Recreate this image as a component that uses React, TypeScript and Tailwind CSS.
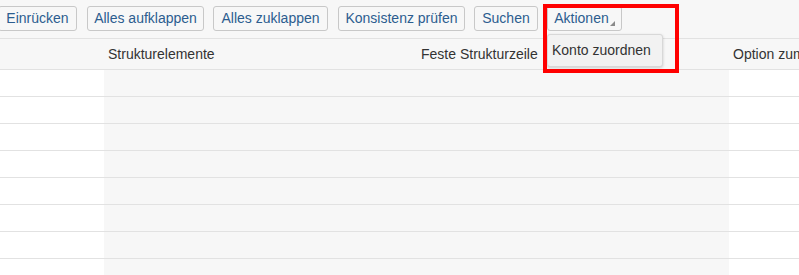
const buttons: Array<[string, string]> = [
  ["Einrücken", "ml-[-2px] w-[79px]"],
  ["Alles aufklappen", "ml-[10px] w-[117px]"],
  ["Alles zuklappen", "ml-[9px] w-[115px]"],
  ["Konsistenz prüfen", "ml-[10px] w-[127px]"],
  ["Suchen", "ml-[9px] w-[64px]"],
];

const rows = Array.from({ length: 8 });

export default function App() {
  return (
    <div className="relative h-[275px] w-[799px] overflow-hidden bg-white font-['Liberation_Sans',Arial,sans-serif] text-[14px]">
      <div className="flex h-[38px] items-start bg-[#f7f7f7] pt-[6px]">
        {buttons.map(([label, cls]) => (
          <button
            key={label}
            className={`${cls} h-[25px] shrink-0 rounded-[3px] border border-[#c8c8c8] bg-[#f7f7f7] text-center leading-[23px] text-[#2c5d8f]`}
          >
            {label}
          </button>
        ))}
        <button className="ml-[9px] flex h-[25px] w-[75px] shrink-0 items-center justify-center rounded-[3px] border border-[#c8c8c8] bg-[#f7f7f7] text-[#2c5d8f]">
          <span className="leading-[23px]">Aktionen</span>
          <svg width="5" height="5" viewBox="0 0 5 5" className="mt-[9px] ml-[1px]">
            <path d="M5 0 L5 5 L0 5 Z" fill="#8a8a8a" />
          </svg>
        </button>
      </div>

      <div className="grid h-[32px] grid-cols-[104px_313px_312px_1fr] border-y border-[#e2e2e2] bg-[#f7f7f7] text-[#333]">
        <div />
        <div className="pl-[4px] leading-[30px]">Strukturelemente</div>
        <div className="pl-[4px] leading-[30px]">Feste Strukturzeile</div>
        <div className="whitespace-nowrap pl-[4px] leading-[30px]">Option zum</div>
      </div>

      {rows.map((_, i) => (
        <div key={i} className="grid h-[27px] grid-cols-[104px_313px_312px_1fr] border-b border-[#e2e2e2]">
          <div className="bg-white" />
          <div className="bg-[#f7f7f7]" />
          <div className="bg-[#f7f7f7]" />
          <div className="bg-white" />
        </div>
      ))}

      <div className="absolute left-[547px] top-[34px] h-[33px] w-[116px] rounded-[3px] border border-[#d8d8d8] bg-[#f2f2f2] pl-[4px] leading-[31px] text-[#333] shadow-[0_1px_3px_rgba(0,0,0,0.18)]">
        Konto zuordnen
      </div>

      <div className="pointer-events-none absolute left-[543px] top-[4px] h-[69px] w-[136px] border-[4px] border-[#ff0000]" />
    </div>
  );
}
